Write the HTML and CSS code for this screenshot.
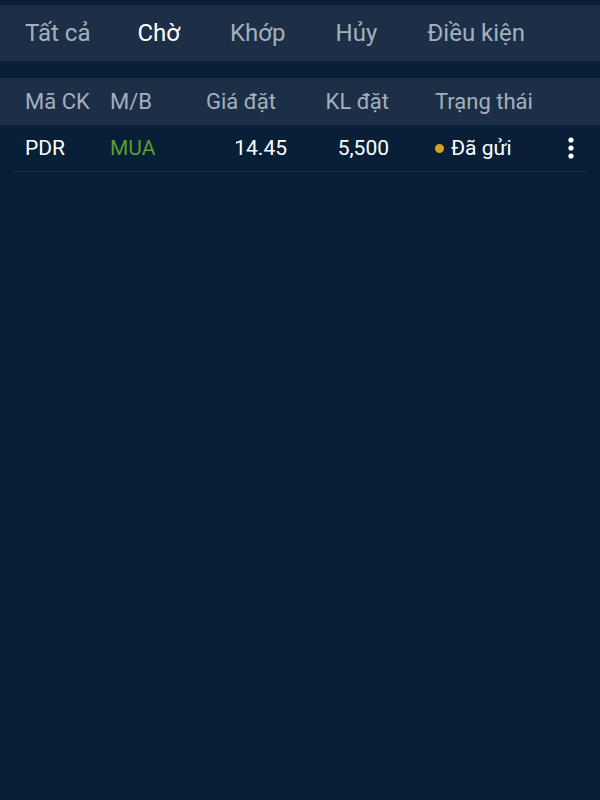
FILE: index.html
```html
<!DOCTYPE html>
<html lang="vi">
<head>
    <meta charset="UTF-8">
    <meta name="viewport" content="width=device-width, initial-scale=1.0">
    <title>Sổ lệnh</title>
    <link rel="stylesheet" href="styles.css">
</head>
<body>

    <!-- Tabs -->
    <nav class="tabs">
        <span class="tab">Tất cả</span>
        <span class="tab active">Chờ</span>
        <span class="tab">Khớp</span>
        <span class="tab">Hủy</span>
        <span class="tab">Điều kiện</span>
    </nav>

    <!-- Order table -->
    <div class="order-head">
        <span>Mã CK</span>
        <span>M/B</span>
        <span class="num price-head">Giá đặt</span>
        <span class="num">KL đặt</span>
        <span class="status-head">Trạng thái</span>
        <span></span>
    </div>

    <div class="order-row">
        <span>PDR</span>
        <span class="buy">MUA</span>
        <span class="num">14.45</span>
        <span class="num">5,500</span>
        <span class="status"><i class="dot"></i>Đã gửi</span>
        <span class="more">
            <svg width="6" height="22" viewBox="0 0 6 22">
                <circle cx="3" cy="3" r="2.6" fill="#fff"/>
                <circle cx="3" cy="11" r="2.6" fill="#fff"/>
                <circle cx="3" cy="19" r="2.6" fill="#fff"/>
            </svg>
        </span>
    </div>

</body>
</html>
```

FILE: styles.css
```css
* {
    margin: 0;
    padding: 0;
    box-sizing: border-box;
}

body {
    background-color: #081f38;
    font-family: Roboto, "Noto Sans", sans-serif;
    color: #fff;
    height: 100vh;
    padding-top: 5px;
}

/* Tabs */
.tabs {
    height: 56px;
    background-color: #1c2f46;
    display: flex;
    align-items: center;
    gap: 50px;
    padding-left: 25px;
    font-size: 24px;
}

.tab {
    color: #a4afbd;
}

.tab:first-child {
    margin-right: -3px;
}

.tab.active {
    color: #fff;
}

/* Table */
.order-head,
.order-row {
    display: grid;
    grid-template-columns: 85px 72px 105px 102px 1fr 24px;
    align-items: center;
}

.order-head {
    margin-top: 17px;
    height: 47px;
    background-color: #1c2f46;
    color: #a4afbd;
    font-size: 22px;
    padding: 0 17px 0 25px;
}

.order-row {
    height: 47px;
    margin: 0 15px;
    padding: 0 2px 0 10px;
    border-bottom: 1px solid #1d3048;
    font-size: 21px;
}

.num {
    text-align: right;
}

.price-head {
    padding-right: 11px;
}

.status-head,
.status {
    padding-left: 46px;
}

.status {
    display: flex;
    align-items: center;
}

.dot {
    width: 9px;
    height: 9px;
    border-radius: 50%;
    background-color: #d9a21d;
    margin-right: 7px;
}

.buy {
    color: #5c9d2c;
}

.more {
    display: flex;
    justify-content: center;
}
```
